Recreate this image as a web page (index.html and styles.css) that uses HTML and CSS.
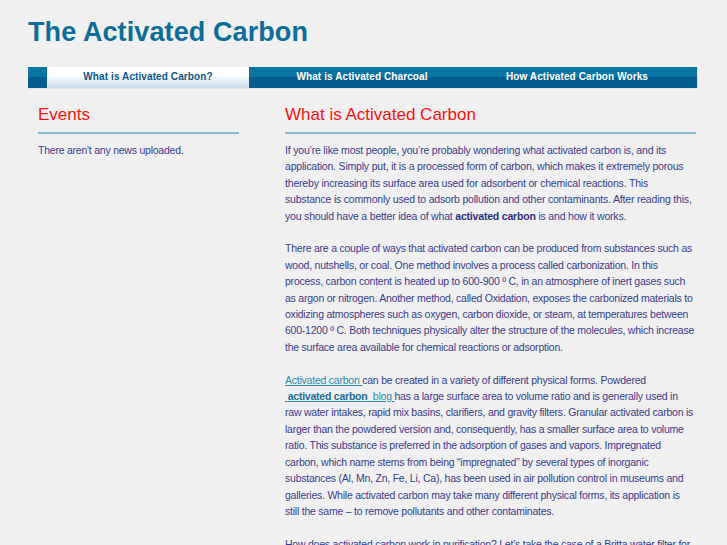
FILE: index.html
```html
<!DOCTYPE html>
<html>
<head>
<meta charset="utf-8">
<link rel="stylesheet" href="styles.css">
</head>
<body>
<div class="page">
  <h1 class="site-title">The Activated Carbon</h1>
  <nav class="nav">
    <span class="nav-cap"></span>
    <a class="tab tab-active tab-1">What is Activated Carbon?</a>
    <a class="tab tab-2">What is Activated Charcoal</a>
    <a class="tab tab-3">How Activated Carbon Works</a>
    <span class="nav-end"></span>
  </nav>
  <div class="columns">
    <aside class="side">
      <h2 class="heading">Events</h2>
      <p class="text">There aren't any news uploaded.</p>
    </aside>
    <main class="main">
      <h2 class="heading">What is Activated Carbon</h2>
      <p class="text text-loose">If you’re like most people, you’re probably wondering what activated carbon is, and its application. Simply put, it is a processed form of carbon, which makes it extremely porous thereby increasing its surface area used for adsorbent or chemical reactions. This substance is commonly used to adsorb pollution and other contaminants. After reading this, you should have a better idea of what <b>activated carbon</b> is and how it works.</p>
      <p class="text">There are a couple of ways that activated carbon can be produced from substances such as wood, nutshells, or coal. One method involves a process called carbonization. In this process, carbon content is heated up to 600-900 º C, in an atmosphere of inert gases such as argon or nitrogen. Another method, called Oxidation, exposes the carbonized materials to oxidizing atmospheres such as oxygen, carbon dioxide, or steam, at temperatures between 600-1200 º C. Both techniques physically alter the structure of the molecules, which increase the surface area available for chemical reactions or adsorption.</p>
      <p class="text"><a class="link">Activated carbon </a>can be created in a variety of different physical forms. Powdered <a class="link link-nowrap">&nbsp;<b>activated carbon</b> &nbsp;blog </a>has a large surface area to volume ratio and is generally used in raw water intakes, rapid mix basins, clarifiers, and gravity filters. Granular activated carbon is larger than the powdered version and, consequently, has a smaller surface area to volume ratio. This substance is preferred in the adsorption of gases and vapors. Impregnated carbon, which name stems from being “impregnated” by several types of inorganic substances (Al, Mn, Zn, Fe, Li, Ca), has been used in air pollution control in museums and galleries. While activated carbon may take many different physical forms, its application is still the same – to remove pollutants and other contaminates.</p>
      <p class="text">How does activated carbon work in purification? Let’s take the case of a Britta water filter for example. The filter contains activated carbon that traps the contaminants in the water.</p>
    </main>
  </div>
</div>
</body>
</html>
```
FILE: styles.css
```css
html, body {
  margin: 0;
  padding: 0;
  background: #f0f0f0;
}
body {
  font-family: "Liberation Sans", Arial, Helvetica, sans-serif;
}
.page {
  padding: 0 29px 0 28px;
}
.site-title {
  margin: 0;
  padding-top: 16px;
  height: 67px;
  box-sizing: border-box;
  font-size: 27px;
  font-weight: bold;
  color: #0b6d99;
  line-height: 32px;
  letter-spacing: 0.1px;
}
.nav {
  display: flex;
  height: 21px;
  background: linear-gradient(#0a76a3 0, #0a76a3 50%, #065c8c 50%, #065c8c 100%);
  border-right: 1px solid #d4dee6;
  border-bottom: 1px solid #dfe4e8;
}
.nav-cap {
  width: 19px;
  flex: none;
}
.tab {
  display: block;
  flex: none;
  font-size: 10px;
  font-weight: bold;
  color: #ffffff;
  text-align: center;
  line-height: 19px;
  letter-spacing: 0.1px;
}
.tab-1 { width: 202px; }
.tab-2 { width: 226px; }
.tab-3 { width: 204px; }
.nav-end { flex: 1; }
.tab-active {
  color: #0b5a8a;
  background: linear-gradient(#ffffff 0, #ffffff 40%, #eef5f8 55%, #c9dfea 100%);
}
.columns {
  display: flex;
  padding-top: 15px;
}
.side {
  width: 201px;
  margin-left: 10px;
  flex: none;
}
.main {
  margin-left: 46px;
  width: 411px;
  flex: none;
}
.heading {
  margin: 0;
  font-size: 17px;
  font-weight: normal;
  color: #ff1010;
  line-height: 22px;
  padding-bottom: 6px;
  border-bottom: 2px solid #88b8cc;
  margin-bottom: 8px;
}
.text {
  margin: 0 0 16.4px 0;
  font-size: 10.5px;
  line-height: 16.4px;
  letter-spacing: -0.23px;
  color: #3a3d8e;
}
.text-loose {
  letter-spacing: -0.19px;
}
.text b {
  color: #2e2f7a;
}
.link {
  color: #2a8bb0;
  text-decoration: underline;
}
.link-nowrap {
  white-space: nowrap;
}
.link b {
  color: #1e6f96;
}
```
